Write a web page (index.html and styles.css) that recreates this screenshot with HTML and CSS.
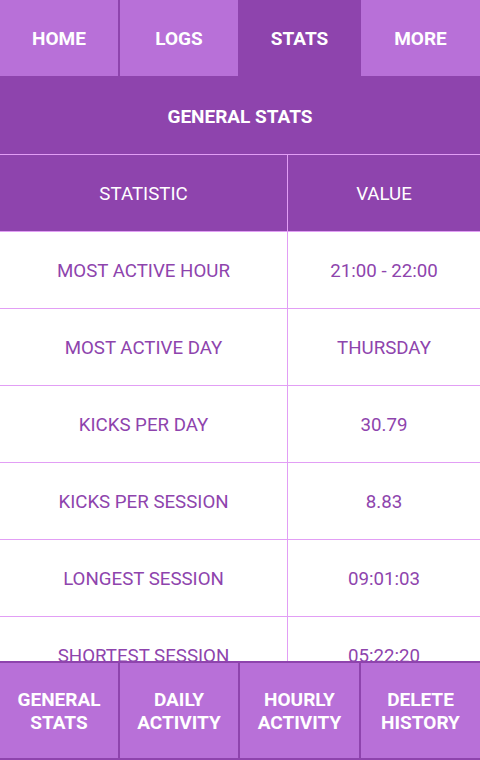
FILE: index.html
```html
<!DOCTYPE html>
<html>
<head>
<meta charset="utf-8">
<link rel="stylesheet" href="styles.css">
</head>
<body>
<div class="app">
  <nav class="tabs">
    <div class="tab">HOME</div>
    <div class="tab">LOGS</div>
    <div class="tab active">STATS</div>
    <div class="tab">MORE</div>
  </nav>
  <div class="title">GENERAL STATS</div>
  <div class="table-wrap">
    <div class="table">
      <div class="row head"><div class="cell">STATISTIC</div><div class="cell">VALUE</div></div>
      <div class="row"><div class="cell">MOST ACTIVE HOUR</div><div class="cell">21:00 - 22:00</div></div>
      <div class="row"><div class="cell">MOST ACTIVE DAY</div><div class="cell">THURSDAY</div></div>
      <div class="row"><div class="cell">KICKS PER DAY</div><div class="cell">30.79</div></div>
      <div class="row"><div class="cell">KICKS PER SESSION</div><div class="cell">8.83</div></div>
      <div class="row"><div class="cell">LONGEST SESSION</div><div class="cell">09:01:03</div></div>
      <div class="row"><div class="cell">SHORTEST SESSION</div><div class="cell">05:22:20</div></div>
    </div>
  </div>
  <nav class="bottom">
    <div class="btn">GENERAL<br>STATS</div>
    <div class="btn">DAILY<br>ACTIVITY</div>
    <div class="btn">HOURLY<br>ACTIVITY</div>
    <div class="btn">DELETE<br>HISTORY</div>
  </nav>
</div>
</body>
</html>
```
FILE: styles.css
```css
* { box-sizing: border-box; }
html, body { margin: 0; padding: 0; }
body {
  width: 480px;
  height: 760px;
  overflow: hidden;
  font-family: Roboto, "Liberation Sans", sans-serif;
  background: #fff;
}
.app {
  display: flex;
  flex-direction: column;
  height: 760px;
}
.tabs {
  display: grid;
  grid-template-columns: 118px 118px 119px 119px;
  column-gap: 2px;
  background: #8e44ad;
  height: 76px;
}
.tab {
  display: flex;
  align-items: center;
  justify-content: center;
  background: #b870d8;
  color: #fff;
  font-weight: 700;
  font-size: 19px;
  padding-top: 1px;
}
.tab.active { background: #8e44ad; }
.title {
  height: 79px;
  background: #8e44ad;
  color: #fff;
  font-weight: 700;
  font-size: 19px;
  display: flex;
  align-items: center;
  justify-content: center;
  padding-top: 2px;
  border-bottom: 1px solid #e29ef5;
}
.table-wrap {
  flex: 1;
  overflow: hidden;
  min-height: 0;
}
.row {
  display: grid;
  grid-template-columns: 287px 1px 192px;
  height: 77px;
  border-bottom: 1px solid #e29ef5;
  background: linear-gradient(#e29ef5, #e29ef5) 287px 0 / 1px 100% no-repeat;
}
.row .cell:nth-child(2) { grid-column: 3; }
.cell {
  display: flex;
  align-items: center;
  justify-content: center;
  font-size: 18.7px;
  color: #8e44ad;
  padding-top: 2px;
}
.row.head {
  background-color: #8e44ad;
}
.row.head .cell { color: #fff; }
.bottom {
  display: grid;
  grid-template-columns: 118px 118px 119px 119px;
  column-gap: 2px;
  background: #8e44ad;
  border-top: 2px solid #8e44ad;
  border-bottom: 2px solid #8e44ad;
  height: 99px;
}
.btn {
  display: flex;
  align-items: center;
  justify-content: center;
  text-align: center;
  background: #b870d8;
  color: #fff;
  font-weight: 700;
  font-size: 19px;
  line-height: 23px;
  padding-top: 1px;
}
```
